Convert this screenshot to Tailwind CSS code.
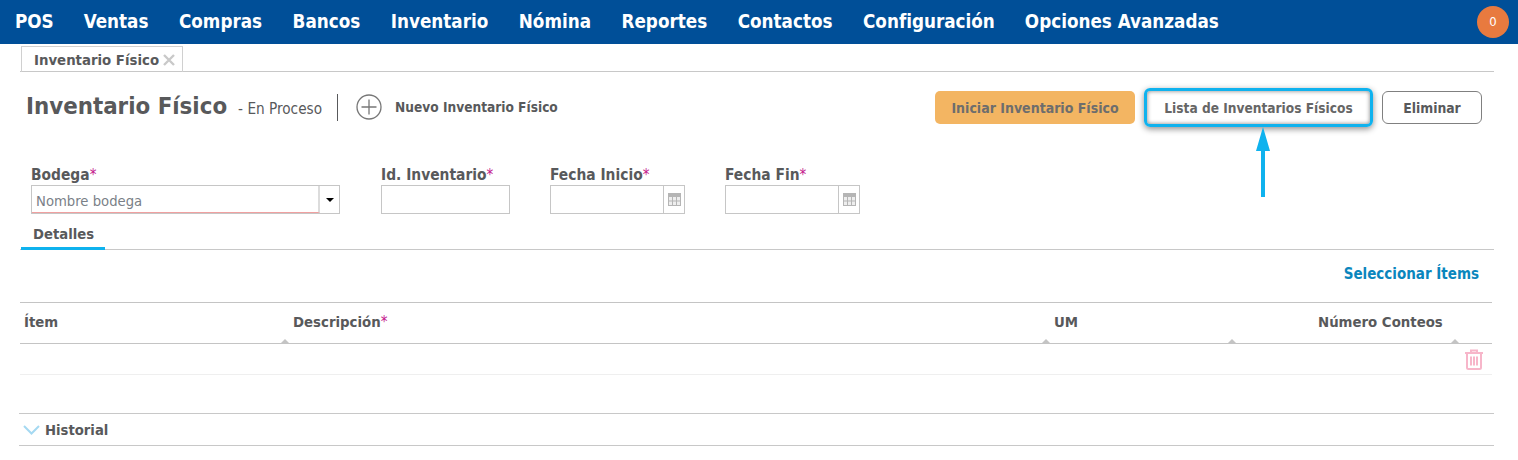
<!DOCTYPE html>
<html lang="es">
<head>
    <meta charset="UTF-8">
    <title>Inventario Físico</title>
    <script src="https://cdn.jsdelivr.net/npm/@tailwindcss/browser@4"></script>
</head>
<body class="bg-white text-[#58595b] font-['DejaVu_Sans_Condensed','DejaVu_Sans',sans-serif] w-[1518px] h-[460px] overflow-hidden">
    <!-- menu -->
    <nav class="h-11 bg-[#004f98] flex items-center pl-[15px] pr-[9px] text-white font-bold text-[18.7px]">
        <a class="mr-[30px]">POS</a>
        <a class="mr-[30.500px]">Ventas</a>
        <a class="mr-[30.500px]">Compras</a>
        <a class="mr-[30.500px]">Bancos</a>
        <a class="mr-[30.500px]">Inventario</a>
        <a class="mr-[30.500px]">Nómina</a>
        <a class="mr-[30.500px]">Reportes</a>
        <a class="mr-[30.500px]">Contactos</a>
        <a class="mr-[30px]">Configuración</a>
        <a>Opciones Avanzadas</a>
        <span class="ml-auto w-8 h-8 rounded-full bg-[#e87a3f] flex items-center justify-center text-[13px] font-normal">0</span>
    </nav>

    <!-- tabs -->
    <div class="ml-[20px] w-[1474px] h-7 border-b border-[#c8c8c8] flex pt-[2px]">
        <div class="ml-px h-[26px] pl-3 pt-px w-[162px] border-x border-t border-[#d0d0d0] flex items-center gap-[4px] text-[14.8px] font-bold whitespace-nowrap">
            Inventario Físico
            <svg class="w-[12px] h-[12px] shrink-0" viewBox="0 0 12 12" stroke="#c9c9c9" stroke-width="2.4"><path d="M1 1l10 10M11 1l-10 10"/></svg>
        </div>
    </div>

    <!-- encabezado -->
    <div class="h-[70px] mb-[22px] pl-[26px] pr-[36px] flex items-center">
        <h1 class="text-[23.8px] font-bold whitespace-nowrap">Inventario Físico</h1>
        <span class="ml-[11px] mt-1 text-[15.2px]">- En Proceso</span>
        <span class="ml-[15px] w-px h-[27px] bg-[#58595b]"></span>
        <svg class="ml-[18px] w-[26px] h-[26px]" viewBox="0 0 26 26" fill="none" stroke="#777" stroke-width="1.3"><circle cx="13" cy="13" r="12"/><path d="M13 5.5v15M5.5 13h15"/></svg>
        <span class="ml-[13px] text-[13.6px] font-bold">Nuevo Inventario Físico</span>
        <div class="ml-auto flex items-center text-[14px] font-bold">
            <button class="w-[200px] h-[33px] pt-[2px] rounded-[5px] bg-[#f3b562] text-[#6d6d6d]">Iniciar Inventario Físico</button>
            <div class="relative ml-[9px]">
                <button class="block w-[229px] h-[39px] pt-[2px] rounded-[6px] border-[3px] border-[#0fb2ee] text-[13.6px] text-[#666] shadow-[0_2px_6px_rgba(0,0,0,0.45),inset_0_0_4px_rgba(0,0,0,0.5)]">Lista de Inventarios Físicos</button>
                <svg class="absolute left-[111px] top-[39px] w-[16px] h-[72px]" viewBox="0 0 16 72" fill="#0fb2ee"><path d="M8 0L15 24H10V70H6V24H1z"/></svg>
            </div>
            <button class="ml-[9px] w-[100px] h-[33px] pt-[2px] rounded-[6px] border border-[#808080] text-[13.8px]">Eliminar</button>
        </div>
    </div>

    <!-- campos -->
    <div class="pl-[31px] flex items-start text-[15.4px] font-bold">
        <div class="w-[350px]">
            <label class="block h-[21px] leading-[23px]">Bodega<span class="text-[#c4168c] text-[15px] font-normal">*</span></label>
            <div class="w-[309px] h-[29px] border border-[#c6c6c6] flex">
                <div class="w-[288px] border-b border-[#f0a0a0] border-r-2 border-r-[#dcdcdc] pl-1 pt-[4px] text-[14.7px] font-normal text-[#7a7f87]">Nombre bodega</div>
                <div class="flex-1 flex items-center justify-center"><svg class="w-2 h-1" viewBox="0 0 8 4"><path d="M0 0h8L4 4z"/></svg></div>
            </div>
        </div>
        <div class="w-[169px]">
            <label class="block h-[21px] leading-[23px]">Id. Inventario<span class="text-[#c4168c] text-[15px] font-normal">*</span></label>
            <div class="w-[129px] h-[29px] border border-[#c6c6c6]"></div>
        </div>
        <div class="w-[175px]">
            <label class="block h-[21px] leading-[23px]">Fecha Inicio<span class="text-[#c4168c] text-[15px] font-normal">*</span></label>
            <div class="w-[135px] h-[29px] border border-[#c6c6c6] flex justify-end">
                <div class="w-[21px] border-l border-[#c6c6c6] flex items-center justify-center">
                    <svg class="w-[13px] h-[13px]" viewBox="0 0 13 13"><rect width="13" height="13" fill="#b5b5b5"/><path d="M1 4h11v8H1z" fill="#eee"/><path d="M4.5 4v8M8.5 4v8M1 8h11" stroke="#b5b5b5"/></svg>
                </div>
            </div>
        </div>
        <div>
            <label class="block h-[21px] leading-[23px]">Fecha Fin<span class="text-[#c4168c] text-[15px] font-normal">*</span></label>
            <div class="w-[135px] h-[29px] border border-[#c6c6c6] flex justify-end">
                <div class="w-[21px] border-l border-[#c6c6c6] flex items-center justify-center">
                    <svg class="w-[13px] h-[13px]" viewBox="0 0 13 13"><rect width="13" height="13" fill="#b5b5b5"/><path d="M1 4h11v8H1z" fill="#eee"/><path d="M4.5 4v8M8.5 4v8M1 8h11" stroke="#b5b5b5"/></svg>
                </div>
            </div>
        </div>
    </div>

    <!-- pestaña detalles -->
    <div class="ml-[20px] mt-[6px] w-[1474px] h-[30px] border-b border-[#c8c8c8] flex">
        <div class="ml-px w-[84px] h-[30px] border-b-[3px] border-[#0fb2ee] pl-3 pt-[3px] text-[14.7px] font-bold">Detalles</div>
    </div>

    <div class="h-[52px] w-[1479px] pb-[3px] flex items-center justify-end text-[15px] font-bold text-[#0a86bd]">Seleccionar Ítems</div>

    <!-- tabla -->
    <div class="ml-[20px] w-[1472px] text-[14.8px] font-bold">
        <div class="relative h-[42px] border-y border-[#c4c4c4] grid grid-cols-[273px_761px_164px_1fr] items-center pb-[2px]">
            <span class="pl-[4px]">Ítem</span>
            <span>Descripción<span class="text-[#c4168c] text-[15px] font-normal">*</span></span>
            <span>UM</span>
            <span class="pl-[100px] whitespace-nowrap">Número Conteos</span>
            <i class="absolute bottom-0 left-[261px] border-x-4 border-x-transparent border-b-4 border-b-[#c4c4c4]"></i>
            <i class="absolute bottom-0 left-[1022px] border-x-4 border-x-transparent border-b-4 border-b-[#c4c4c4]"></i>
            <i class="absolute bottom-0 left-[1208px] border-x-4 border-x-transparent border-b-4 border-b-[#c4c4c4]"></i>
            <i class="absolute bottom-0 left-[1431px] border-x-4 border-x-transparent border-b-4 border-b-[#c4c4c4]"></i>
        </div>
        <div class="h-[31px] border-b border-[#efefef] flex items-center justify-end pr-[8px]">
            <svg class="w-[20px] h-[21px]" viewBox="0 0 20 21" fill="none" stroke="#f7b6ca" stroke-width="2"><path d="M1 4h18M7 4V1.5h6V4M3 4v14.5a1.5 1.5 0 0 0 1.5 1.5h11a1.5 1.5 0 0 0 1.5-1.5V4M7 7.5v9M10 7.5v9M13 7.5v9"/></svg>
        </div>
    </div>

    <!-- historial -->
    <div class="ml-[19px] mt-[38px] w-[1475px] h-[33px] border-y border-[#c8c8c8] flex items-center gap-[5px] pl-[4px] text-[14.7px] font-bold">
        <svg class="w-[17px] h-[10px]" viewBox="0 0 17 10" fill="none" stroke="#a5d9f2" stroke-width="2"><path d="M1 1l7.500 7.500 7.500-7.500"/></svg>
        <span class="pt-[2px]">Historial</span>
    </div>
</body>
</html>
